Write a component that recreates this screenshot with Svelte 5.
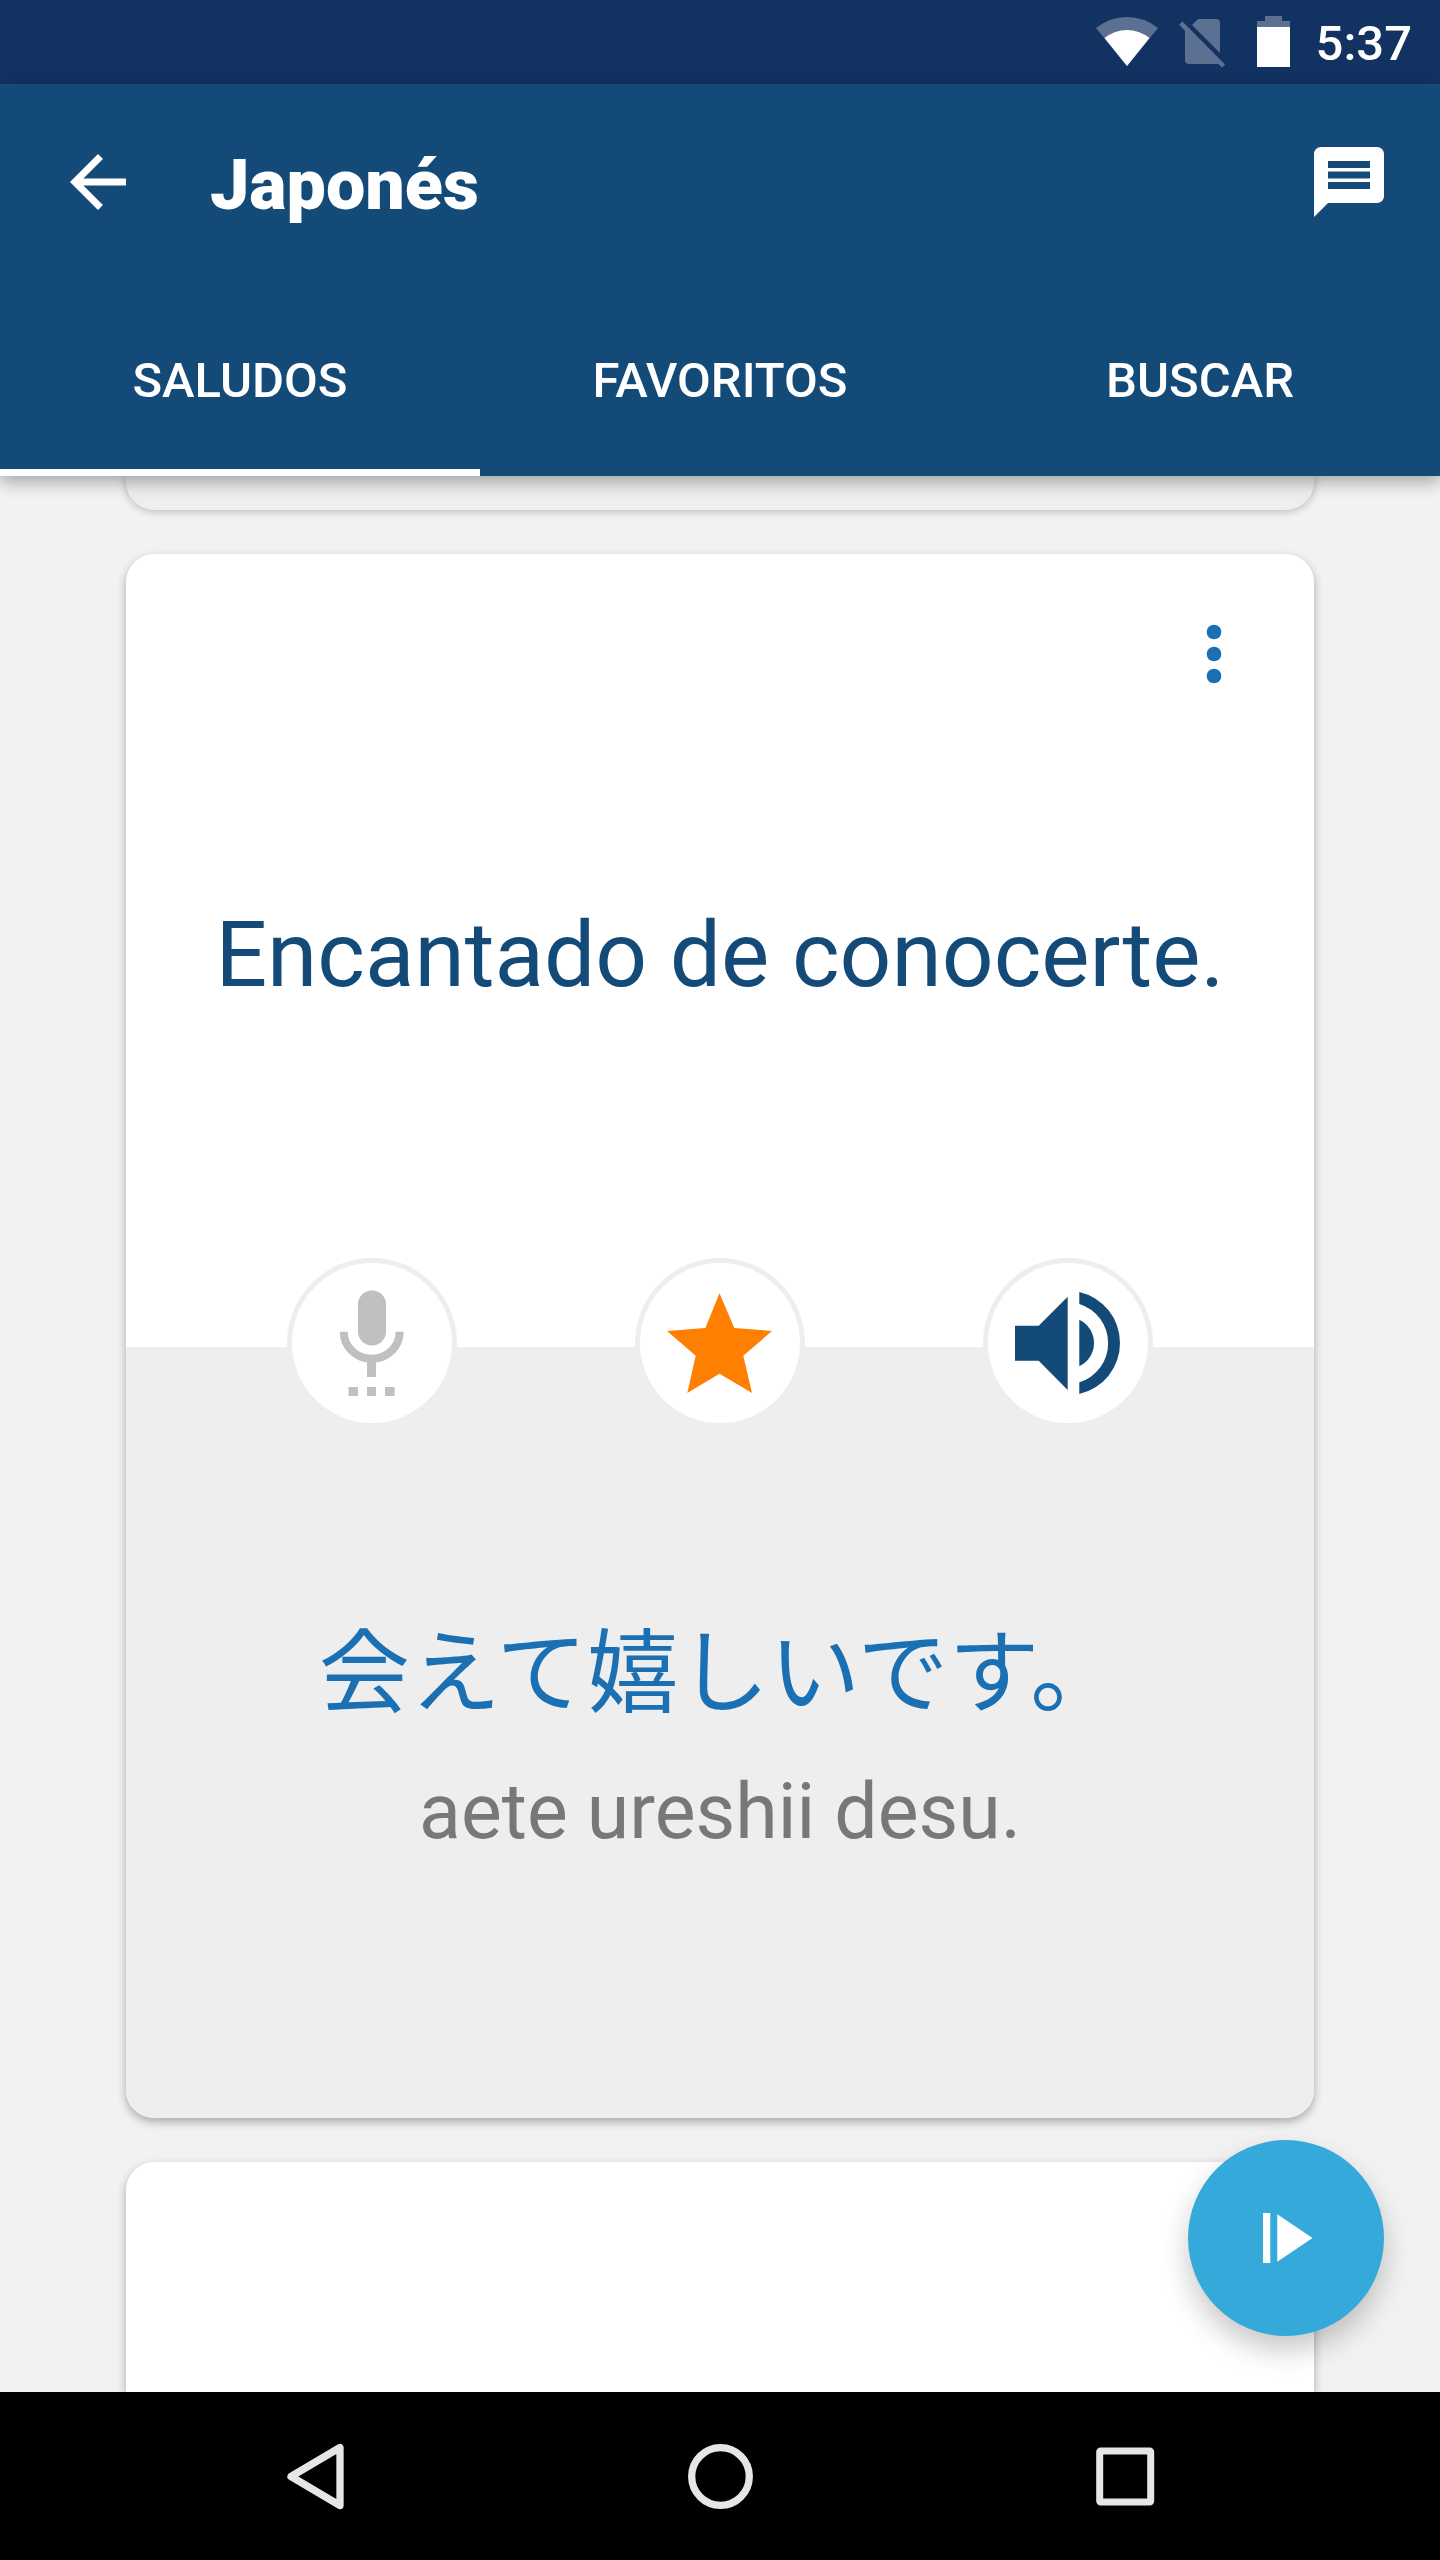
<script>
  const tabs = ['SALUDOS', 'FAVORITOS', 'BUSCAR'];
  let active = $state(0);
</script>

<div class="app">
  <div class="status">
    <svg width="62" height="84" viewBox="0 0 62 84" aria-hidden="true">
      <path fill="#5c7091" d="M31 66 0 28Q14 17 31 17T62 28Z" />
      <path fill="#fff" d="M31 66 8.500 38Q19 30 31 30T53.500 38Z" />
    </svg>
    <svg width="59" height="84" viewBox="0 0 59 84" aria-hidden="true">
      <g fill="#5c7091">
        <path d="M4.500 21.500 47 64.500 44 67.500 40.500 64H11Q7 64 7 60V31L1 24.500Z" />
        <path d="M14 25 20 19H38Q42 19 42 23V53Z" />
      </g>
    </svg>
    <svg width="39" height="84" viewBox="0 0 39 84" aria-hidden="true">
      <path fill="#5c7091" d="M8 16H25V21H33V27H0V21H8Z" />
      <path fill="#fff" d="M0 27H33V67H0Z" />
    </svg>
    <span class="clock">5:37</span>
  </div>

  <header>
    <div class="toolbar">
      <button class="icon" aria-label="Atrás">
        <svg width="84" height="84" viewBox="0 0 24 24" aria-hidden="true">
          <path fill="#fff" d="M20 11H7.830l5.590-5.590L12 4l-8 8 8 8 1.410-1.410L7.830 13H20v-2z" />
        </svg>
      </button>
      <h1>Japonés</h1>
      <button class="icon" aria-label="Mensajes">
        <svg width="84" height="84" viewBox="0 0 24 24" aria-hidden="true">
          <path fill="#fff" d="M20 2H4c-1.100 0-1.990.9-1.990 2L2 22l4-4h14c1.100 0 2-.9 2-2V4c0-1.100-.9-2-2-2zm-2 12H6v-2h12v2zm0-3H6V9h12v2zm0-3H6V6h12v2z" />
        </svg>
      </button>
    </div>
    <div class="tabs" role="tablist">
      {#each tabs as tab, i}
        <button role="tab" aria-selected={active === i} class:active={active === i} onclick={() => (active = i)}>{tab}</button>
      {/each}
    </div>
  </header>

  <main>
    <div class="card before"></div>

    <article class="card phrase">
      <section class="source">
        <button class="icon more" aria-label="Más opciones">
          <svg width="88" height="88" viewBox="0 0 24 24" aria-hidden="true">
            <g fill="#1b70b3">
              <circle cx="12" cy="6" r="2" />
              <circle cx="12" cy="12" r="2" />
              <circle cx="12" cy="18" r="2" />
            </g>
          </svg>
        </button>
        <p>Encantado de conocerte.</p>
      </section>

      <div class="actions">
        <button class="round" aria-label="Grabar">
          <svg width="160" height="160" viewBox="0 0 160 160" aria-hidden="true">
            <g fill="#c0c0c0">
              <rect x="66" y="27.500" width="28" height="55" rx="14" />
              <path d="M75 95h9v19h-9zM56.500 124h9.500v9h-9.500zM75 124h9v9h-9zM93 124h9.500v9h-9.500z" />
            </g>
            <path fill="none" stroke="#c0c0c0" stroke-width="8" d="M51.700 68.700A28 27 0 0 0 107.700 68.700" />
          </svg>
        </button>
        <button class="round" aria-label="Favorito">
          <svg width="160" height="160" viewBox="0 0 160 160" aria-hidden="true">
            <path fill="#ff8000" d="M79.500 30.300 94.300 65 132 68 103.300 92.700 112 130 79.500 110.700 47.300 130 55.700 92.700 27 68 65.300 65Z" />
          </svg>
        </button>
        <button class="round" aria-label="Escuchar">
          <svg width="160" height="160" viewBox="0 0 160 160" aria-hidden="true">
            <path fill="#144a78" d="M27 62.700H50.700L79.700 33.700V127L50.700 97.700H27ZM91.300 29A52.300 52.300 0 0 1 91.300 131V119.300A41 41 0 0 0 91.300 41ZM91.300 56.700A25.800 25.800 0 0 1 91.300 103.300Z" />
          </svg>
        </button>
      </div>

      <section class="target">
        <p class="native" lang="ja">会えて嬉しいです。</p>
        <p class="romaji">aete ureshii desu.</p>
      </section>
    </article>

    <div class="card after"></div>

    <button class="fab" aria-label="Reproducir">
      <svg width="196" height="196" viewBox="0 0 196 196" aria-hidden="true">
        <path fill="#fff" d="M75 73h7.300v50H75zM89.300 74.300 124.500 98 89.300 121.700Z" />
      </svg>
    </button>
  </main>

  <nav aria-label="Sistema">
    <button class="icon" aria-label="Volver">
      <svg width="84" height="84" viewBox="0 0 84 84" aria-hidden="true">
        <path fill="none" stroke="#e6e6e6" stroke-width="7.300" stroke-linejoin="round" d="M67 13.500V71.500L18 42.500Z" />
      </svg>
    </button>
    <button class="icon" aria-label="Inicio">
      <svg width="84" height="84" viewBox="0 0 84 84" aria-hidden="true">
        <circle cx="42.500" cy="42.500" r="28.800" fill="none" stroke="#e6e6e6" stroke-width="7.300" />
      </svg>
    </button>
    <button class="icon" aria-label="Recientes">
      <svg width="84" height="84" viewBox="0 0 84 84" aria-hidden="true">
        <rect x="16.700" y="17" width="51" height="51" rx="1" fill="none" stroke="#e6e6e6" stroke-width="7" stroke-linejoin="round" />
      </svg>
    </button>
  </nav>
</div>

<style>
  :global(body) {
    margin: 0;
    background: #f2f2f2;
  }

  .app {
    display: flex;
    flex-direction: column;
    min-height: 100vh;
    font-family: Roboto, 'Noto Sans CJK JP', sans-serif;
  }

  svg {
    display: block;
  }

  button {
    margin: 0;
    padding: 0;
    border: 0;
    background: none;
    font: inherit;
    color: inherit;
    cursor: pointer;
  }

  h1,
  p {
    margin: 0;
  }

  .icon {
    display: flex;
  }

  .status {
    display: flex;
    align-items: center;
    justify-content: flex-end;
    gap: 20px;
    height: 84px;
    padding-right: 28px;
    background: #123262;
    color: #fff;
  }

  .clock {
    padding-top: 4px;
    font-size: 49px;
    font-weight: 500;
    line-height: 80px;
  }

  header {
    position: relative;
    z-index: 1;
    background: #144a78;
    color: #fff;
    box-shadow: 0 6px 16px rgba(0, 0, 0, 0.32);
  }

  .toolbar {
    display: flex;
    align-items: center;
    height: 196px;
    padding: 0 49px 0 56px;
  }

  h1 {
    flex: 1;
    padding: 6px 0 0 70px;
    font-size: 70px;
    font-weight: 900;
    line-height: 84px;
  }

  .tabs {
    display: grid;
    grid-template-columns: repeat(3, 1fr);
    height: 196px;
  }

  .tabs button {
    padding-top: 4px;
    border-top: 7px solid transparent;
    border-bottom: 7px solid transparent;
    font-size: 49px;
    font-weight: 500;
  }

  .tabs .active {
    border-bottom-color: #fff;
  }

  main {
    position: relative;
    flex: 1;
    display: flex;
    flex-direction: column;
    gap: 44px;
    padding: 0 126px;
    overflow: hidden;
  }

  .card {
    border-radius: 28px;
    background: #fff;
    box-shadow: 0 4px 10px rgba(0, 0, 0, 0.3);
  }

  .before {
    height: 34px;
    border-radius: 0 0 28px 28px;
    background: #eee;
    box-shadow: 0 1px 8px rgba(0, 0, 0, 0.26);
  }

  .after {
    flex: 1;
    min-height: 230px;
    border-radius: 28px 28px 0 0;
  }

  .source,
  .target {
    display: flex;
    flex-direction: column;
    align-items: center;
    justify-content: center;
    text-align: center;
  }

  .source {
    position: relative;
    box-sizing: border-box;
    min-height: 793px;
    padding-top: 8px;
    color: #144a78;
    font-size: 91px;
  }

  .more {
    position: absolute;
    top: 56px;
    right: 56px;
  }

  .actions {
    position: relative;
    display: flex;
    justify-content: center;
    gap: 178px;
    margin: -89px 0 -81px;
  }

  .round {
    border: 5px solid #eee;
    border-radius: 50%;
    background: #fff;
  }

  .target {
    min-height: 771px;
    border-radius: 0 0 28px 28px;
    background: #eee;
  }

  .native {
    color: #1b70b3;
    font-size: 91px;
    line-height: 130px;
  }

  .romaji {
    color: #787878;
    font-size: 77px;
    line-height: 90px;
    margin-top: 28px;
  }

  .fab {
    position: absolute;
    right: 56px;
    bottom: 56px;
    border-radius: 50%;
    background: #36a9db;
    box-shadow: 0 14px 28px rgba(0, 0, 0, 0.22);
  }

  nav {
    position: relative;
    display: grid;
    grid-template-columns: repeat(3, 1fr);
    justify-items: center;
    align-items: center;
    height: 168px;
    padding: 0 112px;
    background: #000;
  }
</style>
